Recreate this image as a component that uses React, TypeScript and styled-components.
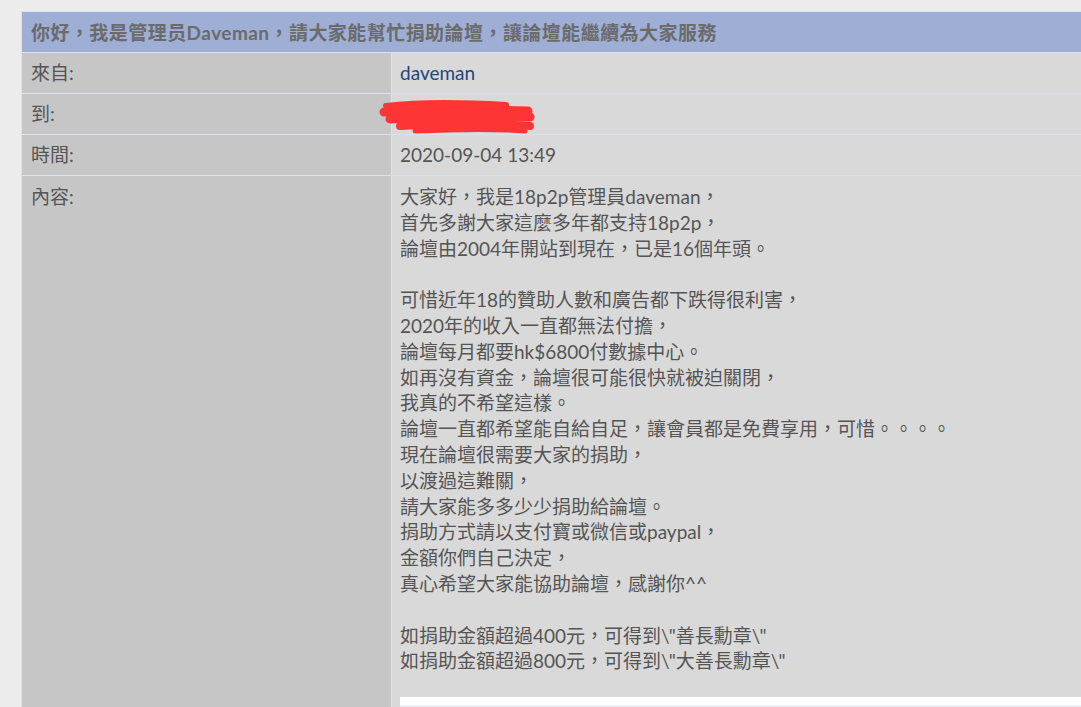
import { FC } from 'react';
import styled, { createGlobalStyle } from 'styled-components';

const GlobalStyle = createGlobalStyle`
  html, body {
    margin: 0;
    padding: 0;
    overflow: hidden;
    background: #ececec;
  }
  body {
    font-family: Lato, 'Noto Sans CJK TC', sans-serif;
    font-size: 19px;
    color: #555;
  }
`;

const Page = styled.div`
  padding: 11px 0 0 21px;
  overflow: hidden;
`;

const Table = styled.table`
  width: 1090px;
  border-collapse: separate;
  border-spacing: 1px;
  background: #dde2f1;
  table-layout: fixed;
`;

const LabelCol = styled.col`
  width: 369px;
`;

const HeaderCell = styled.th`
  height: 40px;
  padding: 1px 9px 0;
  background: #9eaed5;
  color: #6b6b6b;
  font-weight: bold;
  text-align: left;
  line-height: 25px;
  letter-spacing: 0.45px;
  white-space: nowrap;
  box-sizing: border-box;
`;

const LabelCell = styled.td<{ $top?: boolean }>`
  height: 40px;
  padding: ${(p) => (p.$top ? '8px 9px' : '0 9px')};
  background: #c6c6c6;
  color: #555;
  vertical-align: ${(p) => (p.$top ? 'top' : 'middle')};
  line-height: 25.8px;
  box-sizing: border-box;
`;

const ValueCell = styled.td<{ $top?: boolean }>`
  position: relative;
  height: 40px;
  padding: ${(p) => (p.$top ? '8px 8px' : '0 8px')};
  background: #d9d9d9;
  color: #555;
  vertical-align: ${(p) => (p.$top ? 'top' : 'middle')};
  line-height: 25.8px;
  box-sizing: border-box;
`;

const UserLink = styled.a`
  color: #25467d;
  text-decoration: none;
`;

const Scribble = styled.svg`
  position: absolute;
  left: -12px;
  top: 6px;
  width: 160px;
  height: 36px;
  overflow: visible;
`;

const Message = styled.div`
  white-space: pre-line;
`;

const Attachment = styled.div`
  margin-top: 23px;
  height: 40px;
  background: linear-gradient(#fdfdfd 0, #fdfdfd 8px, #e6e8f2 9px, #f4f4f4 14px);
`;

const message = `大家好，我是18p2p管理員daveman，
首先多謝大家這麼多年都支持18p2p，
論壇由2004年開站到現在，已是16個年頭。

可惜近年18的贊助人數和廣告都下跌得很利害，
2020年的收入一直都無法付擔，
論壇每月都要hk$6800付數據中心。
如再沒有資金，論壇很可能很快就被迫關閉，
我真的不希望這樣。
論壇一直都希望能自給自足，讓會員都是免費享用，可惜。。。。
現在論壇很需要大家的捐助，
以渡過這難關，
請大家能多多少少捐助給論壇。
捐助方式請以支付寶或微信或paypal，
金額你們自己決定，
真心希望大家能協助論壇，感謝你^^

如捐助金額超過400元，可得到\\"善長勳章\\"
如捐助金額超過800元，可得到\\"大善長勳章\\"`;

const App: FC = () => {
  return (
    <Page>
      <GlobalStyle />
      <Table>
        <colgroup>
          <LabelCol />
          <col />
        </colgroup>
        <thead>
          <tr>
            <HeaderCell colSpan={2}>你好，我是管理员Daveman，請大家能幫忙捐助論壇，讓論壇能繼續為大家服務</HeaderCell>
          </tr>
        </thead>
        <tbody>
          <tr>
            <LabelCell>來自:</LabelCell>
            <ValueCell>
              <UserLink href="#">daveman</UserLink>
            </ValueCell>
          </tr>
          <tr>
            <LabelCell>到:</LabelCell>
            <ValueCell>
              <Scribble viewBox="0 0 160 36">
                <g fill="none" stroke="#ff3535" strokeLinecap="round" strokeLinejoin="round">
                  <path d="M6 6 C40 2 90 3 126 5" strokeWidth="6" />
                  <path d="M4 12 C50 9 110 10 148 11" strokeWidth="9" />
                  <path d="M10 19 C60 16 110 17 150 17" strokeWidth="9" />
                  <path d="M20 26 C70 23 120 24 150 26" strokeWidth="8" />
                  <path d="M35 31 C80 29 120 29 145 31" strokeWidth="5" />
                </g>
              </Scribble>
            </ValueCell>
          </tr>
          <tr>
            <LabelCell>時間:</LabelCell>
            <ValueCell>2020-09-04 13:49</ValueCell>
          </tr>
          <tr>
            <LabelCell $top>內容:</LabelCell>
            <ValueCell $top>
              <Message>{message}</Message>
              <Attachment />
            </ValueCell>
          </tr>
        </tbody>
      </Table>
    </Page>
  );
};

export default App;
